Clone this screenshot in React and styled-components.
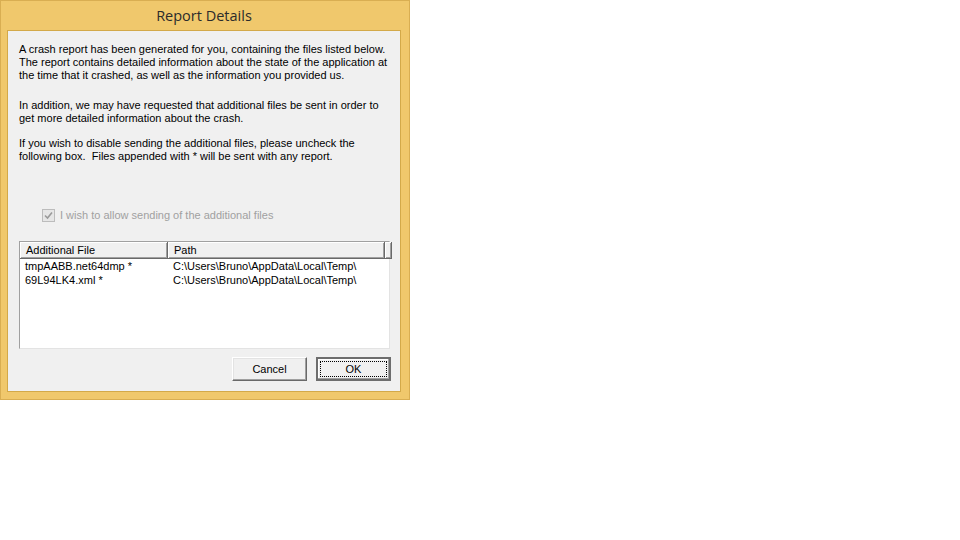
import React from 'react';
import styled, { createGlobalStyle } from 'styled-components';

const Global = createGlobalStyle`
	html, body {
		margin: 0;
		padding: 0;
		background: #ffffff;
	}
	body {
		font-family: "Liberation Sans", Arial, sans-serif;
		font-size: 11px;
		color: #000000;
	}
`;

const Window = styled.div`
	width: 410px;
	height: 400px;
	box-sizing: border-box;
	border: 1px solid #d9ae52;
	background: #f0c86c;
	padding: 0 8px 7px 6px;
	display: flex;
	flex-direction: column;
`;

const TitleBar = styled.div`
	height: 29px;
	display: flex;
	align-items: center;
	justify-content: center;
	font-family: "Open Sans", "Noto Sans", sans-serif;
	font-size: 14.5px;
	color: #2b2b2b;
	padding-bottom: 1px;
	box-sizing: border-box;
`;

const Client = styled.div`
	flex: 1;
	border: 1px solid #d3a949;
	background: #f0f0f0;
	padding: 12px 9px 0 11px;
	display: flex;
	flex-direction: column;
`;

const Para = styled.p`
	margin: ${props => props.top || 0}px 0 0 0;
	line-height: 13px;
	white-space: pre;
`;

const CheckRow = styled.label`
	margin: 45px 0 0 23px;
	display: flex;
	align-items: center;
	gap: 5px;
	height: 14px;
	color: #a0a0a0;
`;

const CheckBox = styled.span`
	width: 11px;
	height: 11px;
	border: 1px solid #bcbcbc;
	background: #e6e6e6;
	display: flex;
	align-items: center;
	justify-content: center;
`;

const List = styled.div`
	margin-top: 19px;
	width: 371px;
	height: 108px;
	box-sizing: border-box;
	border-top: 1px solid #a0a0a0;
	border-left: 1px solid #a0a0a0;
	border-right: 1px solid #e3e3e3;
	border-bottom: 1px solid #e3e3e3;
	background: #ffffff;
	display: flex;
	flex-direction: column;
`;

const Header = styled.div`
	display: grid;
	grid-template-columns: 148px 217px 4px;
	height: 17px;
`;

const HeaderCell = styled.div`
	box-sizing: border-box;
	background: #f0f0f0;
	border-right: 1px solid #696969;
	border-bottom: 1px solid #696969;
	box-shadow: inset 1px 1px 0 #ffffff, inset -1px -1px 0 #a0a0a0;
	padding-left: 6px;
	line-height: 16px;
`;

const Row = styled.div`
	display: grid;
	grid-template-columns: 148px 1fr;
	height: 14px;
	line-height: 14px;
	&:first-of-type {
		margin-top: 2px;
	}
`;

const Cell = styled.div`
	padding-left: 5px;
	white-space: pre;
`;

const ButtonBar = styled.div`
	margin-top: 8px;
	display: flex;
	justify-content: flex-end;
	gap: 9px;
`;

const Button = styled.button`
	width: 75px;
	height: 24px;
	box-sizing: border-box;
	font-family: "Liberation Sans", Arial, sans-serif;
	font-size: 11px;
	color: #000000;
	background: #f0f0f0;
	padding: 0;
	border: 1px solid;
	border-color: #ffffff #696969 #696969 #ffffff;
	box-shadow: inset -1px -1px 0 #a0a0a0, inset 1px 1px 0 #e3e3e3;
	position: relative;
	${props => props.primary && `
		border: 2px solid #6d6d6d;
		box-shadow: inset -1px -1px 0 #a0a0a0, inset 1px 1px 0 #ffffff;
	`}
`;

const Focus = styled.span`
	position: absolute;
	inset: 2px;
	border: 1px dotted #000000;
`;

const files = [
	{ name: 'tmpAABB.net64dmp *', path: 'C:\\Users\\Bruno\\AppData\\Local\\Temp\\' },
	{ name: '69L94LK4.xml *', path: 'C:\\Users\\Bruno\\AppData\\Local\\Temp\\' },
];

export default function App() {
	return (
		<>
			<Global />
			<Window>
				<TitleBar>Report Details</TitleBar>
				<Client>
					<Para>
						A crash report has been generated for you, containing the files listed below.{'\n'}
						The report contains detailed information about the state of the application at{'\n'}
						the time that it crashed, as well as the information you provided us.
					</Para>
					<Para top={17}>
						In addition, we may have requested that additional files be sent in order to{'\n'}
						get more detailed information about the crash.
					</Para>
					<Para top={12}>
						If you wish to disable sending the additional files, please uncheck the{'\n'}
						following box.  Files appended with * will be sent with any report.
					</Para>
					<CheckRow>
						<CheckBox>
							<svg width="9" height="9" viewBox="0 0 9 9">
								<path d="M1 4.5 L3.5 7 L8 1.5" fill="none" stroke="#9a9a9a" strokeWidth="1.6" />
							</svg>
						</CheckBox>
						I wish to allow sending of the additional files
					</CheckRow>
					<List>
						<Header>
							<HeaderCell>Additional File</HeaderCell>
							<HeaderCell>Path</HeaderCell>
							<HeaderCell />
						</Header>
						{files.map(f => (
							<Row key={f.name}>
								<Cell>{f.name}</Cell>
								<Cell>{f.path}</Cell>
							</Row>
						))}
					</List>
					<ButtonBar>
						<Button>Cancel</Button>
						<Button primary><Focus />OK</Button>
					</ButtonBar>
				</Client>
			</Window>
		</>
	);
}
